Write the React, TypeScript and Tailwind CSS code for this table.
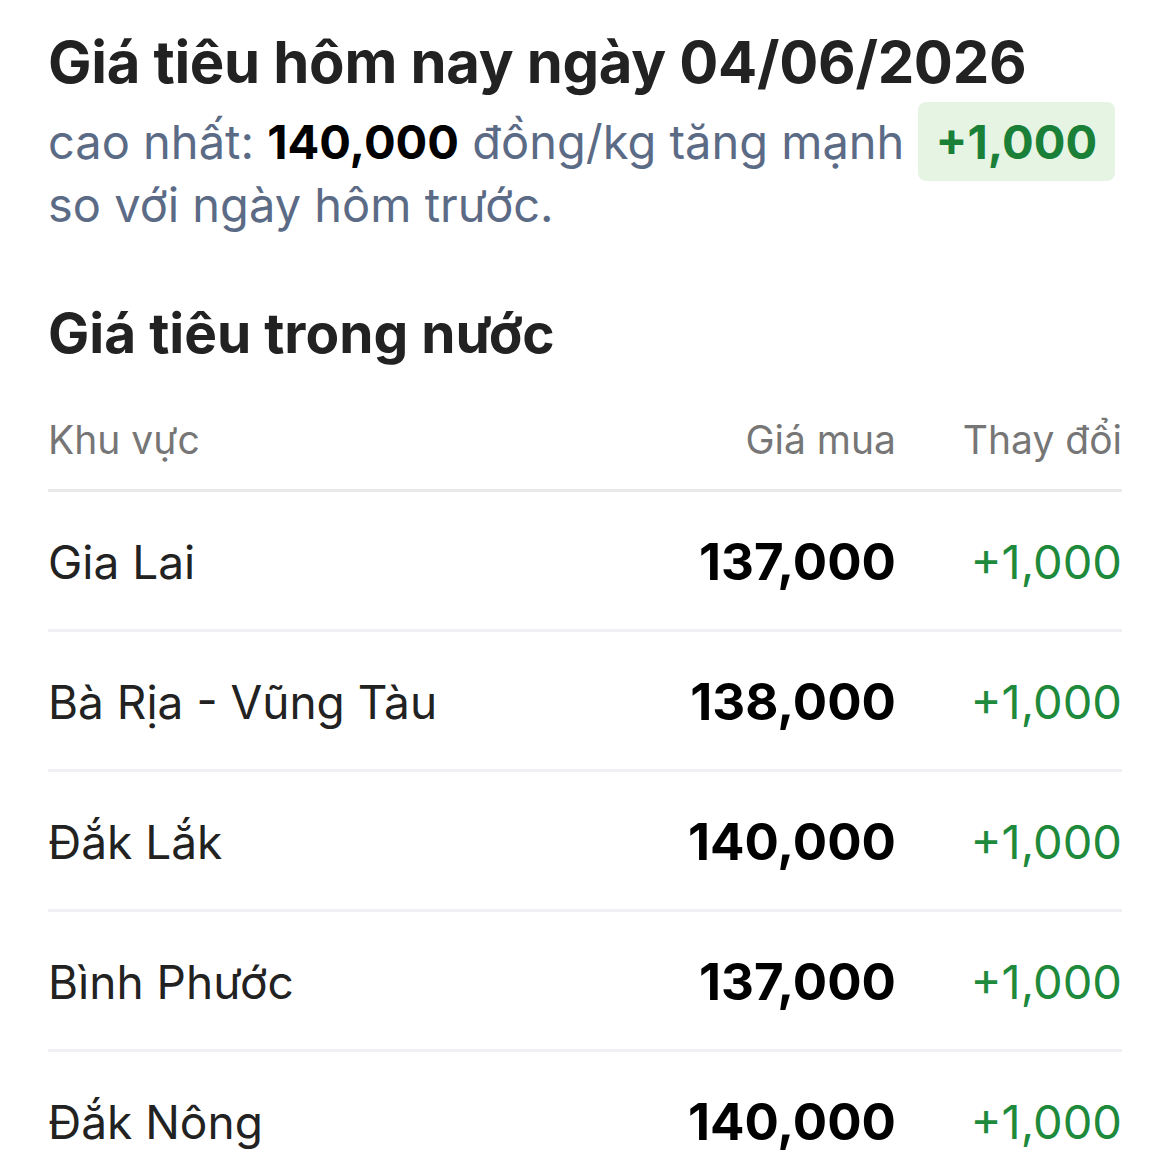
const rows = [
  { name: "Gia Lai", price: "137,000", change: "+1,000" },
  { name: "Bà Rịa - Vũng Tàu", price: "138,000", change: "+1,000" },
  { name: "Đắk Lắk", price: "140,000", change: "+1,000" },
  { name: "Bình Phước", price: "137,000", change: "+1,000" },
  { name: "Đắk Nông", price: "140,000", change: "+1,000" },
];

export default function App() {
  return (
    <div className="min-h-screen bg-white px-[48px] pt-[29px] font-['Inter',sans-serif] text-[#222]">
      <h1 className="text-[58px] font-bold leading-[66px] tracking-[-0.3px] text-[#222]">
        Giá tiêu hôm nay ngày 04/06/2026
      </h1>
      <p className="mt-[15px] text-[47px] leading-[63px] text-[#5b6b86]">
        cao nhất: <span className="font-bold text-black">140,000</span> đồng/kg tăng mạnh{" "}
        <span className="rounded-[8px] bg-[#e6f4e4] px-[18px] py-[11px] font-bold text-[#1a7f37]">+1,000</span>
        {" "}so với ngày hôm trước.
      </p>

      <h2 className="mt-[64px] text-[55px] font-bold leading-[66px] text-[#222]">Giá tiêu trong nước</h2>

      <div className="mt-[28px]">
        <div className="flex h-[98px] items-center border-b-[3px] border-[#e9e9eb] pb-[2px] text-[39px] text-[#767676]">
          <div className="flex-1">Khu vực</div>
          <div className="text-right">Giá mua</div>
          <div className="w-[226px] text-right">Thay đổi</div>
        </div>
        {rows.map((r) => (
          <div key={r.name} className="flex h-[140px] items-center border-b-[3px] border-[#eef0f3] pt-[3px]">
            <div className="flex-1 text-[46px] text-[#222]">{r.name}</div>
            <div className="text-right text-[51px] font-bold text-black">{r.price}</div>
            <div className="w-[226px] text-right text-[47px] text-[#1e8a3c]">{r.change}</div>
          </div>
        ))}
      </div>
    </div>
  );
}
